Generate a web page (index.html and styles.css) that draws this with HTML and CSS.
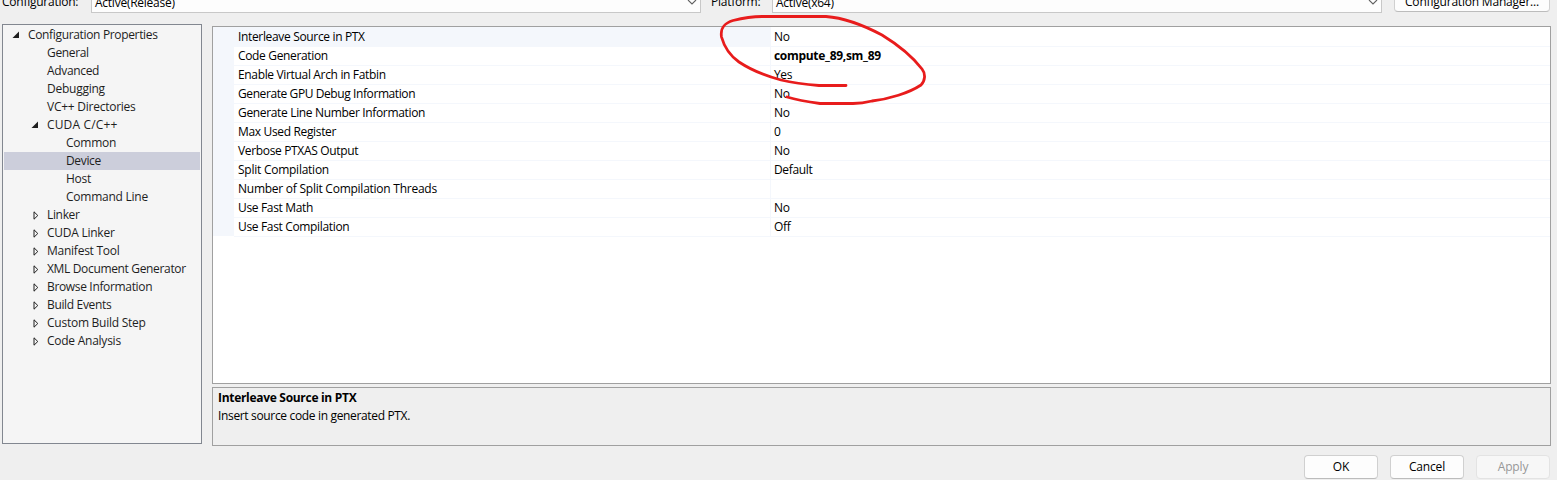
FILE: index.html
```html
<!DOCTYPE html>
<html lang="en">
<head>
<meta charset="utf-8">
<title>Property Pages</title>
<link rel="stylesheet" href="styles.css">
</head>
<body>
<div class="dialog">
  <header class="topbar">
    <label class="label-config">Configuration:</label>
    <div class="combo combo-config"><span>Active(Release)</span><svg class="chevron" viewBox="0 0 10 6"><path d="M1 1l4 4 4-4"/></svg></div>
    <label class="label-platform">Platform:</label>
    <div class="combo combo-platform"><span>Active(x64)</span><svg class="chevron" viewBox="0 0 10 6"><path d="M1 1l4 4 4-4"/></svg></div>
    <div class="button manager"><span>Configuration Manager...</span></div>
  </header>
  <main class="content">
    <nav class="tree">
      <div class="node l0"><svg class="arrow open" viewBox="0 0 8 8"><path d="M7 .5V7H.5z"/></svg><span>Configuration Properties</span></div>
      <div class="node l1"><span>General</span></div>
      <div class="node l1"><span>Advanced</span></div>
      <div class="node l1 loose"><span>Debugging</span></div>
      <div class="node l1 loose"><span>VC++ Directories</span></div>
      <div class="node l1 wide"><svg class="arrow open" viewBox="0 0 8 8"><path d="M7 .5V7H.5z"/></svg><span>CUDA C/C++</span></div>
      <div class="node l2 loose"><span>Common</span></div>
      <div class="node l2 selected"><span>Device</span></div>
      <div class="node l2 loose"><span>Host</span></div>
      <div class="node l2 loose"><span>Command Line</span></div>
      <div class="node l1"><svg class="arrow" viewBox="0 0 6 9"><path d="M1 .8v7.4L4.8 4.5z"/></svg><span>Linker</span></div>
      <div class="node l1 loose"><svg class="arrow" viewBox="0 0 6 9"><path d="M1 .8v7.4L4.8 4.5z"/></svg><span>CUDA Linker</span></div>
      <div class="node l1 loose"><svg class="arrow" viewBox="0 0 6 9"><path d="M1 .8v7.4L4.8 4.5z"/></svg><span>Manifest Tool</span></div>
      <div class="node l1"><svg class="arrow" viewBox="0 0 6 9"><path d="M1 .8v7.4L4.8 4.5z"/></svg><span>XML Document Generator</span></div>
      <div class="node l1"><svg class="arrow" viewBox="0 0 6 9"><path d="M1 .8v7.4L4.8 4.5z"/></svg><span>Browse Information</span></div>
      <div class="node l1"><svg class="arrow" viewBox="0 0 6 9"><path d="M1 .8v7.4L4.8 4.5z"/></svg><span>Build Events</span></div>
      <div class="node l1 loose"><svg class="arrow" viewBox="0 0 6 9"><path d="M1 .8v7.4L4.8 4.5z"/></svg><span>Custom Build Step</span></div>
      <div class="node l1 loose"><svg class="arrow" viewBox="0 0 6 9"><path d="M1 .8v7.4L4.8 4.5z"/></svg><span>Code Analysis</span></div>
    </nav>
    <section class="panel">
      <div class="grid">
        <div class="row current"><div class="name">Interleave Source in PTX</div><div class="value">No</div></div>
        <div class="row"><div class="name">Code Generation</div><div class="value changed">compute_89,sm_89</div></div>
        <div class="row"><div class="name">Enable Virtual Arch in Fatbin</div><div class="value">Yes</div></div>
        <div class="row"><div class="name tight">Generate GPU Debug Information</div><div class="value">No</div></div>
        <div class="row"><div class="name">Generate Line Number Information</div><div class="value">No</div></div>
        <div class="row"><div class="name">Max Used Register</div><div class="value">0</div></div>
        <div class="row"><div class="name">Verbose PTXAS Output</div><div class="value">No</div></div>
        <div class="row"><div class="name loose">Split Compilation</div><div class="value">Default</div></div>
        <div class="row"><div class="name loose">Number of Split Compilation Threads</div><div class="value"></div></div>
        <div class="row"><div class="name">Use Fast Math</div><div class="value">No</div></div>
        <div class="row"><div class="name">Use Fast Compilation</div><div class="value">Off</div></div>
      </div>
      <div class="description">
        <div class="title"><span>Interleave Source in PTX</span></div>
        <div><span>Insert source code in generated PTX.</span></div>
      </div>
    </section>
  </main>
  <footer class="actions">
    <div class="button"><span>OK</span></div>
    <div class="button"><span>Cancel</span></div>
    <div class="button disabled"><span>Apply</span></div>
  </footer>
  <svg class="annotation" viewBox="0 0 230 100"><path d="M127 75.5H100C88 74.500 75 73 62 70C47 66 32 60 20 52C10 45 5 36 2.500 27C1 17 6 13 14 10.500C24 8 34 6.500 43 6.500L107 6.500C127 8 146 16 163 25C181 36 193 46 203 59C207 64 206 71 202 75C190 83 170 89 153 91C145 93 138 93.500 134 93.500H101C90 92 78 90 68 87"/></svg>
</div>
</body>
</html>
```
FILE: styles.css
```css
* { box-sizing: border-box; }
body {
  margin: 0;
  width: 1557px;
  height: 480px;
  overflow: hidden;
  background: #efefef;
  color: #000;
  font: 12px/18px "Open Sans", "Noto Sans", sans-serif;
  letter-spacing: -0.34px;
  white-space: nowrap;
}
.dialog { position: relative; height: 480px; overflow: hidden; }
.topbar { display: flex; height: 24px; margin-top: -11px; padding-left: 2px; line-height: 23px; letter-spacing: -0.25px; }
.label-config { width: 89px; line-height: 25px; }
.label-platform { width: 61px; margin-left: 10px; line-height: 25px; }
.combo {
  display: flex;
  justify-content: space-between;
  width: 610px;
  height: 24px;
  padding: 1px 3px 0 3px;
  border: 1px solid #c8c8c8;
  background: #fdfdfd;
}
.chevron { width: 10px; height: 6px; margin-top: 8px; fill: none; stroke: #606060; stroke-width: 1.1; }
.button {
  width: 74px;
  height: 24px;
  border: 1px solid #d0d0d0;
  border-bottom-color: #bcbcbc;
  border-radius: 4px;
  background: #fdfdfd;
  line-height: 22px;
  letter-spacing: -0.15px;
  text-align: center;
}
.manager { width: 156px; height: 23px; margin-left: 12px; line-height: 24px; letter-spacing: -0.2px; }
.content { display: flex; gap: 10px; margin-top: 11px; padding-left: 2px; }
.tree {
  width: 200px;
  height: 420px;
  padding: 1px;
  border: 1px solid #828790;
  background: #f5f5f5;
  color: #1e1e1e;
}
.node { display: flex; align-items: center; height: 18px; }
.l0 { padding-left: 8px; }
.l1 { padding-left: 43px; }
.l2 { padding-left: 62px; }
.loose { letter-spacing: -0.25px; }
.wide { letter-spacing: 0.15px; }
.tight { letter-spacing: -0.41px; }
.selected { background: #cccedb; }
.arrow { width: 6px; height: 9px; margin-left: -14px; margin-right: 8px; fill: none; stroke: #1e1e1e; }
.arrow.open { width: 8px; height: 8px; margin-left: -16px; margin-right: 8px; fill: #1e1e1e; stroke: none; }
.l0 .arrow.open { margin-left: 0; }
.panel { display: flex; flex-direction: column; gap: 3px; padding-top: 2px; width: 1339px; }
.grid { height: 358px; border: 1px solid #a0a0a0; background: #fff; }
.row {
  display: grid;
  grid-template-columns: 537px 1fr;
  height: 19px;
  border-left: 21px solid #f4f7fc;
  line-height: 19px;
}
.name, .value { padding-left: 4px; border-bottom: 1px solid #f4f7fc; }
.name { border-right: 1px solid #f4f7fc; }
.value { padding-left: 3px; }
.current .name { background: #f4f7fc; }
.changed, .title { font-weight: 700; letter-spacing: -0.3px; }
.description { height: 59px; padding: 1px 5px; border: 1px solid #a0a0a0; }
.actions { display: flex; gap: 12px; justify-content: flex-end; padding: 9px 7px 0 0; }
.disabled { border-color: #e3e3e3; background: #f7f7f7; color: #979797; }
.annotation {
  position: absolute;
  left: 719px;
  top: 10px;
  width: 230px;
  height: 100px;
  fill: none;
  stroke: #e81c1c;
  stroke-width: 2.8;
  stroke-linecap: round;
  stroke-linejoin: round;
}
```
